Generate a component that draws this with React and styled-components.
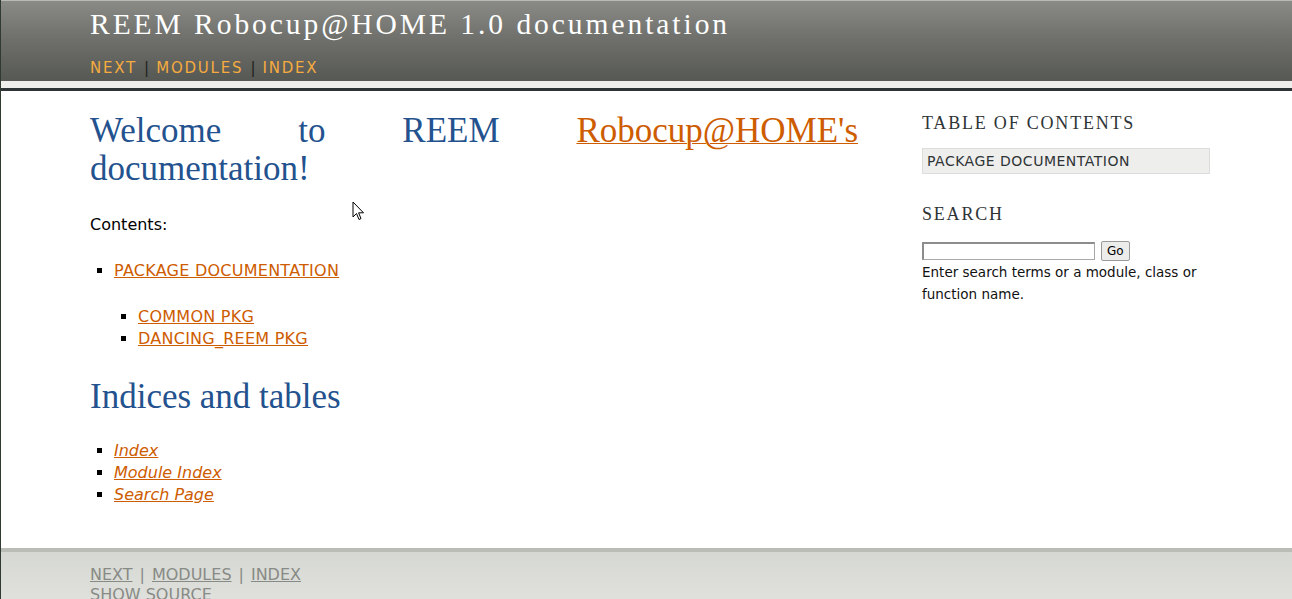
import React from 'react';
import styled, { createGlobalStyle } from 'styled-components';

const GlobalStyle = createGlobalStyle`
  html, body {
    margin: 0;
    padding: 0;
    background: #ffffff;
  }
  body {
    font-family: "DejaVu Sans", Verdana, sans-serif;
    font-size: 16px;
    color: #000;
    overflow: hidden;
  }
`;

const Page = styled.div`
  position: relative;
  border-left: 1px solid #2f3b30;
  min-height: 599px;
  background: #ffffff;
`;

const HeaderWrapper = styled.div`
  border-bottom: 3px solid #2e3436;
`;

const Header = styled.div`
  background: linear-gradient(to bottom, #8a8b86 0%, #70716c 45%, #565853 100%);
  border-top: 1px solid #b9bab5;
  border-bottom: 7px solid #eeeeec;
  padding: 5px 0 4px 89px;
  height: 71px;
  box-sizing: content-box;
`;

const Title = styled.h1`
  margin: 0;
  font-family: Georgia, "Liberation Serif", serif;
  font-weight: normal;
  font-size: 29.5px;
  line-height: 36px;
  letter-spacing: 0.1em;
  color: #ffffff;
`;

const Rel = styled.div`
  margin-top: 16px;
  font-size: 15px;
  line-height: 20px;
  color: #000;
`;

const RelLink = styled.a`
  color: ${p => p.$footer ? '#888a85' : '#f5ab3f'};
  text-decoration: ${p => p.$footer ? 'underline' : 'none'};
  letter-spacing: ${p => p.$footer ? '0' : '0.12em'};
  text-transform: uppercase;
`;

const Sep = styled.span`
  color: ${p => p.$footer ? '#888a85' : '#1e1e1e'};
  padding: 0 7px;
`;

const Main = styled.div`
  display: flex;
  gap: 64px;
  padding-left: 89px;
  height: 457px;
  background: #ffffff;
`;

const Body = styled.div`
  width: 768px;
`;

const H1 = styled.h1`
  margin: 21px 0 0;
  font-family: Georgia, "Liberation Serif", serif;
  font-weight: normal;
  font-size: 35px;
  line-height: 38px;
  color: #23528e;
  text-align: justify;
`;

const H2 = styled.h2`
  margin: 28px 0 0;
  font-family: Georgia, "Liberation Serif", serif;
  font-weight: normal;
  font-size: 35px;
  line-height: 38px;
  color: #23528e;
`;

const HeadLink = styled.a`
  color: #ce5c00;
  text-decoration: underline;
  text-decoration-thickness: 1px;
`;

const Para = styled.p`
  margin: 26px 0 0;
  line-height: 22px;
`;

const List = styled.ul`
  list-style: none;
  margin: 24px 0 0;
  padding-left: 24px;
  line-height: 22px;
`;

const Item = styled.li`
  &::before {
    content: '';
    display: inline-block;
    width: 5px;
    height: 5px;
    background: #000;
    margin-left: -17px;
    margin-right: 12px;
    vertical-align: 3px;
  }
`;

const TocLink = styled.a`
  color: #ce5c00;
  text-decoration: underline;
  text-transform: ${p => p.$italic ? 'none' : 'uppercase'};
  letter-spacing: ${p => p.$italic ? '0' : '0.25px'};
  font-style: ${p => p.$italic ? 'italic' : 'normal'};
`;

const Sidebar = styled.div`
  width: 288px;
  padding-top: 20px;
`;

const SideTitle = styled.h3`
  margin: 0;
  font-family: Georgia, "Liberation Serif", serif;
  font-weight: normal;
  font-size: 18px;
  line-height: 24px;
  letter-spacing: 0.1em;
  text-transform: uppercase;
  color: #2e3436;
`;

const TocBox = styled.div`
  margin-top: 13px;
  background: #eeeeec;
  border: 1px solid #dcdcda;
  padding: 0 4px;
  height: 24px;
  line-height: 24px;
  font-size: 14px;
  letter-spacing: 0.5px;
  color: #2e3436;
  text-transform: uppercase;
`;

const SearchBlock = styled.div`
  margin-top: 28px;
`;

const SearchRow = styled.form`
  display: flex;
  align-items: center;
  gap: 6px;
  margin-top: 15px;
`;

const SearchInput = styled.input`
  width: 166px;
  height: 13px;
  padding: 1px 2px;
  border: 1px solid #a8a8a6;
  border-top: 2px solid #8d8d8b;
  border-left: 2px solid #8d8d8b;
  background: #fff;
`;

const GoButton = styled.button`
  height: 20px;
  padding: 0 5px;
  font-family: "DejaVu Sans", Verdana, sans-serif;
  font-size: 12px;
  color: #000;
  background: #ececea;
  border: 1px solid #9a9a98;
  border-radius: 2px;
`;

const Hint = styled.p`
  margin: 0;
  font-size: 13.5px;
  line-height: 22px;
  color: #111;
`;

const Footer = styled.div`
  border-top: 4px solid #babdb6;
  background: linear-gradient(to bottom, #d6d8d3 0%, #e4e5e2 100%);
  padding: 13px 0 0 89px;
  height: 60px;
  font-size: 16px;
  line-height: 20px;
`;

const Cursor = styled.svg`
  position: absolute;
  left: 351px;
  top: 201px;
`;

const App = () => {
  return (
    <Page>
      <GlobalStyle />
      <HeaderWrapper>
        <Header>
          <Title>REEM Robocup@HOME 1.0 documentation</Title>
          <Rel>
            <RelLink href="#">Next</RelLink>
            <Sep>|</Sep>
            <RelLink href="#">Modules</RelLink>
            <Sep>|</Sep>
            <RelLink href="#">Index</RelLink>
          </Rel>
        </Header>
      </HeaderWrapper>
      <Main>
        <Body>
          <H1>
            Welcome to REEM <HeadLink href="#">Robocup@HOME's</HeadLink> documentation!
          </H1>
          <Para>Contents:</Para>
          <List>
            <Item>
              <TocLink href="#">Package documentation</TocLink>
              <List>
                <Item><TocLink href="#">common pkg</TocLink></Item>
                <Item><TocLink href="#">dancing_reem pkg</TocLink></Item>
              </List>
            </Item>
          </List>
          <H2>Indices and tables</H2>
          <List>
            <Item><TocLink href="#" $italic>Index</TocLink></Item>
            <Item><TocLink href="#" $italic>Module Index</TocLink></Item>
            <Item><TocLink href="#" $italic>Search Page</TocLink></Item>
          </List>
        </Body>
        <Sidebar>
          <SideTitle>Table of Contents</SideTitle>
          <TocBox>Package documentation</TocBox>
          <SearchBlock>
            <SideTitle>Search</SideTitle>
            <SearchRow onSubmit={e => e.preventDefault()}>
              <SearchInput type="text" />
              <GoButton type="button">Go</GoButton>
            </SearchRow>
            <Hint>Enter search terms or a module, class or function name.</Hint>
          </SearchBlock>
        </Sidebar>
      </Main>
      <Footer>
        <RelLink href="#" $footer>Next</RelLink>
        <Sep $footer>|</Sep>
        <RelLink href="#" $footer>Modules</RelLink>
        <Sep $footer>|</Sep>
        <RelLink href="#" $footer>Index</RelLink>
        <br />
        <RelLink href="#" $footer>Show Source</RelLink>
      </Footer>
      <Cursor width="13" height="21" viewBox="0 0 13 21">
        <path d="M1 1 L1 16 L4.5 12.5 L7 18.5 L9 17.6 L6.6 11.8 L11.5 11.8 Z" fill="#fff" stroke="#000" strokeWidth="1" strokeLinejoin="miter" />
      </Cursor>
    </Page>
  );
};

export default App;
